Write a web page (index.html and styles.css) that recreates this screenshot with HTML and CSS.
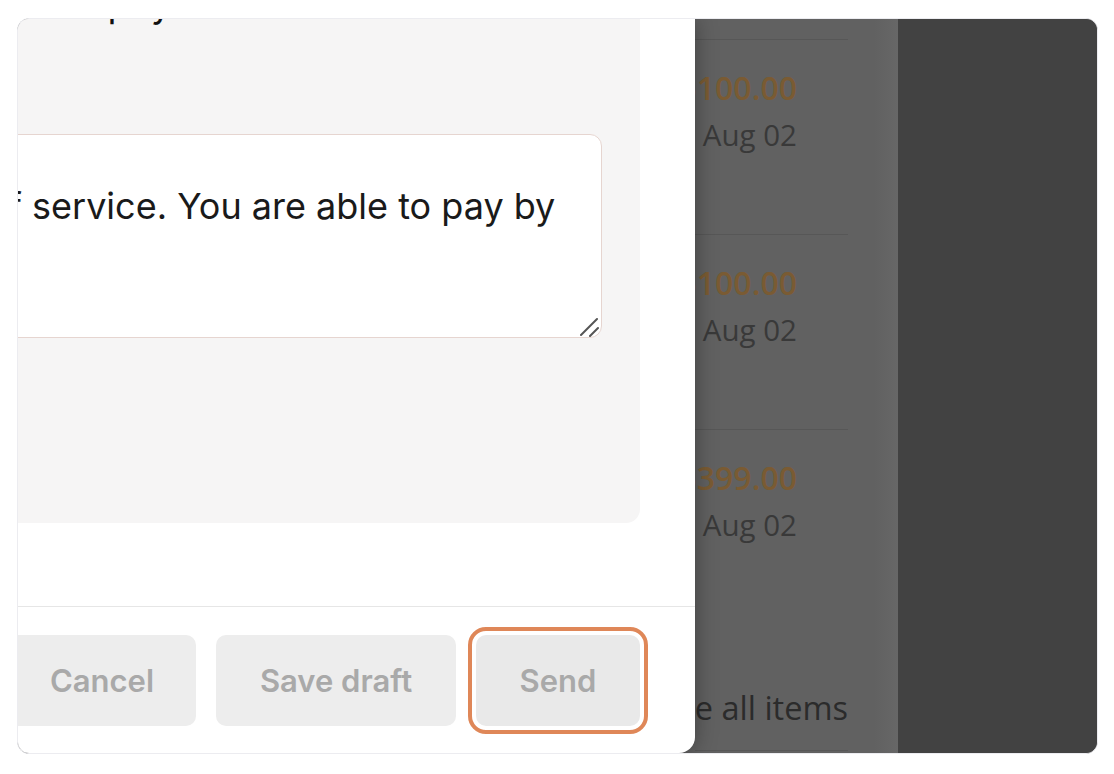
FILE: index.html
```html
<!DOCTYPE html>
<html lang="en">
<head>
    <meta charset="UTF-8">
    <meta name="viewport" content="width=device-width, initial-scale=1.0">
    <title>New message</title>
    <link rel="stylesheet" href="styles.css">
</head>
<body>
    <div class="frame">
        <div class="modal">
            <div class="modal-body">
                <div class="card">
                    <h2 class="subject">Invoice payment reminder</h2>
                    <div class="field">
                        <textarea class="message" rows="4">of service. You are able to pay by</textarea>
                        <svg class="grip" width="20" height="20" viewBox="0 0 20 20">
                            <path d="M18 2 L2 18 M19 11 L11 19" stroke="#555" stroke-width="2" stroke-linecap="round" fill="none"/>
                        </svg>
                    </div>
                </div>
            </div>
            <div class="modal-footer">
                <button class="btn btn-cancel">Cancel</button>
                <button class="btn btn-draft">Save draft</button>
                <button class="btn btn-send">Send</button>
            </div>
        </div>

        <div class="page">
            <div class="items">
                <div class="item item-top"></div>
                <div class="item">
                    <div class="amount">$100.00</div>
                    <div class="date">Aug 02</div>
                </div>
                <div class="item">
                    <div class="amount">$100.00</div>
                    <div class="date">Aug 02</div>
                </div>
                <div class="item">
                    <div class="amount">$399.00</div>
                    <div class="date">Aug 02</div>
                </div>
                <div class="see-all"><span>See all items</span></div>
            </div>
            <div class="sidebar"></div>
        </div>
    </div>
</body>
</html>
```

FILE: styles.css
```css
body {
    margin: 0;
    background: #fff;
}
.frame {
    box-sizing: border-box;
    width: 1081px;
    height: 736px;
    margin: 18px 0 0 17px;
    border: 1px solid #ececf0;
    border-radius: 12px;
    overflow: hidden;
    display: flex;
    background: #616161;
}

/* modal */
.modal {
    flex: 0 0 736px;
    margin-left: -59px;
    background: #fff;
    border-bottom-right-radius: 16px;
    display: flex;
    flex-direction: column;
    position: relative;
    z-index: 1;
    box-shadow: 0 0 22px rgba(0, 0, 0, 0.35);
    font-family: "Inter", "Noto Sans", sans-serif;
}
.modal-body {
    padding-right: 55px;
}
.card {
    height: 504px;
    background: #f6f5f5;
    border-bottom-right-radius: 14px;
    padding: 0 38px 0 0;
    box-sizing: border-box;
    overflow: hidden;
}
.subject {
    margin: -37px 0 0 0;
    padding-left: 13px;
    font-size: 37px;
    font-weight: 400;
    line-height: 44px;
    color: #111;
}
.field {
    position: relative;
    margin-top: 108px;
}
.message {
    display: block;
    box-sizing: border-box;
    width: 100%;
    height: 204px;
    padding: 48px 20px 20px 27px;
    border: 1px solid #e6d5d0;
    border-radius: 12px;
    background: #fff;
    font-family: inherit;
    font-size: 36px;
    line-height: 46px;
    color: #1a1a1a;
    white-space: pre;
    overflow: hidden;
    resize: none;
}
.grip {
    position: absolute;
    right: 3px;
    bottom: 1px;
}
.modal-footer {
    margin-top: auto;
    border-top: 1px solid #e6e6e6;
    display: flex;
    justify-content: flex-end;
    gap: 20px;
    padding: 28px 55px 27px 0;
}
.btn {
    height: 91px;
    border: none;
    border-radius: 10px;
    background: #ededed;
    color: #a9a9a9;
    font-family: inherit;
    font-size: 31px;
    font-weight: 600;
}
.btn-cancel {
    width: 188px;
}
.btn-draft {
    width: 240px;
}
.btn-send {
    width: 164px;
    background: #e9e9e9;
    outline: 4px solid #df8758;
    outline-offset: 4px;
}

/* dimmed page behind the modal */
.page {
    flex: 1;
    display: flex;
    font-family: "Open Sans", sans-serif;
}
.items {
    width: 203px;
    padding-right: 50px;
    box-sizing: border-box;
    background: linear-gradient(to right, #616161 88%, #676767 100%);
}
.item {
    height: 195px;
    border-top: 1px solid #575757;
    box-sizing: border-box;
    padding: 28px 51px 0 0;
    display: flex;
    flex-direction: column;
    align-items: flex-end;
    white-space: nowrap;
}
.item-top {
    height: 20px;
    border-top: none;
    padding: 0;
}
.amount {
    font-size: 32px;
    font-weight: 600;
    line-height: 40px;
    color: #7a5b33;
}
.date {
    margin-top: 5px;
    font-size: 29.5px;
    line-height: 44px;
    color: #393939;
}
.see-all {
    height: 127px;
    border-bottom: 1px solid #575757;
    box-sizing: border-box;
    padding-top: 64px;
    display: flex;
    justify-content: flex-end;
    white-space: nowrap;
    font-size: 32.5px;
    line-height: 40px;
    color: #2b2b2b;
}
.sidebar {
    flex: 1;
    background: #424242;
}
```
